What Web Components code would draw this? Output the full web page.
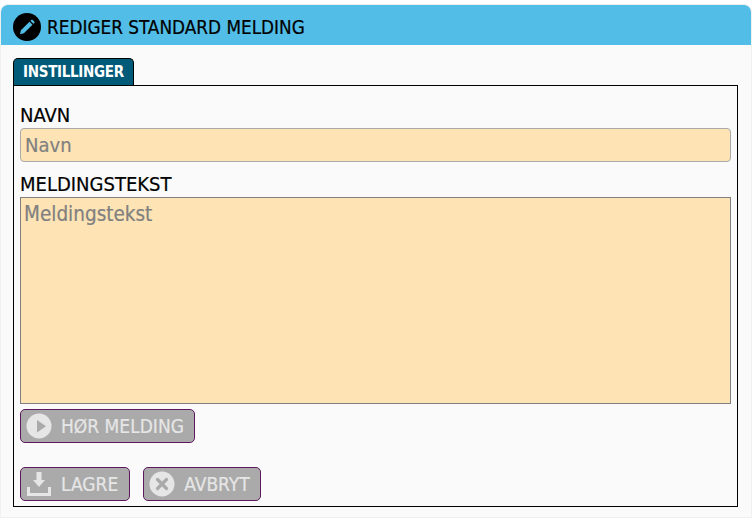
<!DOCTYPE html>
<html lang="no">
<head>
<meta charset="utf-8">
<title>Rediger standard melding</title>
<style>
  html, body { margin: 0; background: #fff; }
  body { padding: 4px 2px 0 0; font-family: "DejaVu Sans", sans-serif; font-stretch: condensed; -webkit-text-stroke: .2px; }
</style>
</head>
<body>
<edit-dialog heading="REDIGER STANDARD MELDING">
  <tab-panel label="INSTILLINGER">
    <form-field label="NAVN" placeholder="Navn"></form-field>
    <form-field label="MELDINGSTEKST" placeholder="Meldingstekst" multiline></form-field>
    <action-row class="first"><action-button icon="play">HØR MELDING</action-button></action-row>
    <action-row><action-button icon="save" style="padding-right:11px">LAGRE</action-button><action-button icon="cancel">AVBRYT</action-button></action-row>
  </tab-panel>
</edit-dialog>

<script>
var ICONS = {
  pencil: '<circle cx="14" cy="14" r="14" fill="#000"/><path d="M7 21.200l.9-3.900 8.600-8.600 3 3-8.600 8.600zM17.400 7.800l.9-.9a1 1 0 0 1 1.400 0l1.600 1.600a1 1 0 0 1 0 1.400l-.9.9z" fill="#52bde6"/>',
  play: '<circle cx="12" cy="12" r="12.500" fill="currentColor"/><path d="M10 6v12.500l9-6.250z" fill="#aaa"/>',
  save: '<path d="M9.500 0h5v8h3.500l-6 7-6-7h3.500z" fill="currentColor"/><path d="M0 15h3v6h18v-6h3v9H0z" fill="currentColor"/>',
  cancel: '<circle cx="12" cy="12" r="12.500" fill="currentColor"/><path d="M7.500 7.500l9 9M16.500 7.500l-9 9" stroke="#aaa" stroke-width="3.200" stroke-linecap="round"/>'
};

customElements.define('edit-dialog', class extends HTMLElement {
  connectedCallback() {
    if (this.shadowRoot) return;
    var root = this.attachShadow({ mode: 'open' });
    root.innerHTML = '<style>'
      + ':host{display:block;height:514px;box-sizing:border-box;background:#fafafa;border:1px solid #f0f0f0;border-top-color:#eee;border-radius:8px 8px 0 0}'
      + 'header{display:flex;align-items:center;gap:6px;box-sizing:border-box;height:40px;padding:4px 0 0 12px;background:#52bde6;border-radius:7px 7px 0 0;font-size:18.800px;color:#000}'
      + 'svg{width:28px;height:28px;display:block}'
      + '.body{padding:13px 13px 0 12px}'
      + '</style><header><svg viewBox="0 0 28 28">' + ICONS.pencil + '</svg><span></span></header><div class="body"><slot></slot></div>';
    root.querySelector('span').textContent = this.getAttribute('heading');
  }
});

customElements.define('tab-panel', class extends HTMLElement {
  connectedCallback() {
    if (this.shadowRoot) return;
    var root = this.attachShadow({ mode: 'open' });
    root.innerHTML = '<style>'
      + ':host{display:block}'
      + '.tab{box-sizing:border-box;width:121px;height:27px;padding-left:9px;line-height:27px;background:#015a78;color:#fff;font-weight:bold;font-size:15px;letter-spacing:-.3px;-webkit-text-stroke:0;border:1px solid #000;border-bottom:0;border-radius:5px 5px 0 0}'
      + '.panel{box-sizing:border-box;height:422px;border:1px solid #000;padding:17px 6px 0 6px}'
      + '</style><div style="display:flex"><div class="tab"></div></div><div class="panel"><slot></slot></div>';
    root.querySelector('.tab').textContent = this.getAttribute('label');
  }
});

customElements.define('form-field', class extends HTMLElement {
  connectedCallback() {
    if (this.shadowRoot) return;
    var root = this.attachShadow({ mode: 'open' });
    var multi = this.hasAttribute('multiline');
    root.innerHTML = '<style>'
      + ':host{display:block;color:#000}'
      + 'label{display:block;font-size:20px;line-height:25px}'
      + 'input,textarea{display:block;box-sizing:border-box;width:100%;margin:0;background:#fee3b4;color:#000;font:inherit;font-size:20px;outline:0}'
      + 'input{height:34px;padding:0 4px;border:1px solid #aaa;border-radius:4px;margin-bottom:10px}'
      + 'textarea{height:207px;padding:4px 3px;border:1px solid #808080;border-radius:0;resize:none;font-size:20.500px}'
      + '::placeholder{color:#808080;opacity:1}'
      + '</style><label></label>' + (multi ? '<textarea></textarea>' : '<input type="text">');
    root.querySelector('label').textContent = this.getAttribute('label');
    root.querySelector(multi ? 'textarea' : 'input').placeholder = this.getAttribute('placeholder');
  }
});

customElements.define('action-row', class extends HTMLElement {
  connectedCallback() {
    if (this.shadowRoot) return;
    var root = this.attachShadow({ mode: 'open' });
    root.innerHTML = '<style>:host{display:flex;gap:13px;margin-top:24px}:host(.first){margin-top:5px}</style><slot></slot>';
  }
});

customElements.define('action-button', class extends HTMLElement {
  connectedCallback() {
    if (this.shadowRoot) return;
    var root = this.attachShadow({ mode: 'open' });
    root.innerHTML = '<style>'
      + ':host{display:inline-flex;align-items:center;gap:10px;box-sizing:border-box;height:34px;padding:0 10px 0 6px;background:#aaa;color:#e6e6e6;border:1px solid #5c1a5c;border-radius:5px;font-size:19px}'
      + 'svg{width:24px;height:24px;display:block;flex:none;overflow:visible}'
      + '</style><svg viewBox="0 0 24 24">' + ICONS[this.getAttribute('icon')] + '</svg><slot></slot>';
  }
});
</script>
</body>
</html>
